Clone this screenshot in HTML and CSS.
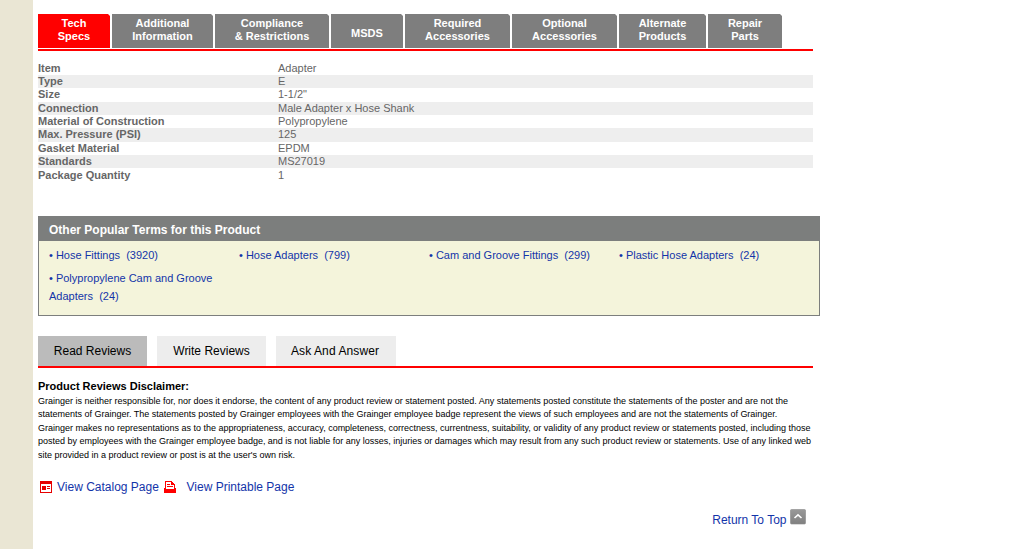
FILE: index.html
```html
<!DOCTYPE html>
<html lang="en">
<head>
<meta charset="utf-8">
<title>Product Details</title>
<link rel="stylesheet" href="styles.css">
</head>
<body>
<div class="page">
  <main class="content">
    <nav class="tabs">
      <a class="tab tab-specs active">Tech<br>Specs</a>
      <a class="tab tab-info">Additional<br>Information</a>
      <a class="tab tab-compliance">Compliance<br>&amp; Restrictions</a>
      <a class="tab tab-msds">MSDS</a>
      <a class="tab tab-required">Required<br>Accessories</a>
      <a class="tab tab-optional">Optional<br>Accessories</a>
      <a class="tab tab-alternate">Alternate<br>Products</a>
      <a class="tab tab-repair">Repair<br>Parts</a>
    </nav>
    <dl class="specs">
      <div class="spec"><dt>Item</dt><dd>Adapter</dd></div>
      <div class="spec"><dt>Type</dt><dd>E</dd></div>
      <div class="spec tall"><dt>Size</dt><dd>1-1/2"</dd></div>
      <div class="spec"><dt>Connection</dt><dd>Male Adapter x Hose Shank</dd></div>
      <div class="spec"><dt>Material of Construction</dt><dd>Polypropylene</dd></div>
      <div class="spec tall"><dt>Max. Pressure (PSI)</dt><dd>125</dd></div>
      <div class="spec"><dt>Gasket Material</dt><dd>EPDM</dd></div>
      <div class="spec"><dt>Standards</dt><dd>MS27019</dd></div>
      <div class="spec last"><dt>Package Quantity</dt><dd>1</dd></div>
    </dl>
    <section class="terms">
      <h2 class="terms-title">Other Popular Terms for this Product</h2>
      <div class="terms-list">
        <a class="term">• Hose Fittings&nbsp; (3920)</a>
        <a class="term">• Hose Adapters&nbsp; (799)</a>
        <a class="term">• Cam and Groove Fittings&nbsp; (299)</a>
        <a class="term">• Plastic Hose Adapters&nbsp; (24)</a>
        <a class="term">• Polypropylene Cam and Groove<br>Adapters&nbsp; (24)</a>
      </div>
    </section>
    <nav class="review-tabs">
      <a class="review-tab selected">Read Reviews</a>
      <a class="review-tab">Write Reviews</a>
      <a class="review-tab ask">Ask And Answer</a>
    </nav>
    <h3 class="disclaimer-title">Product Reviews Disclaimer:</h3>
    <p class="disclaimer">Grainger is neither responsible for, nor does it endorse, the content of any product review or statement posted. Any statements posted constitute the statements of the poster and are not the<br>statements of Grainger. The statements posted by Grainger employees with the Grainger employee badge represent the views of such employees and are not the statements of Grainger.<br>Grainger makes no representations as to the appropriateness, accuracy, completeness, correctness, currentness, suitability, or validity of any product review or statements posted, including those<br>posted by employees with the Grainger employee badge, and is not liable for any losses, injuries or damages which may result from any such product review or statements. Use of any linked web<br>site provided in a product review or post is at the user's own risk.</p>
    <div class="page-links">
      <svg class="icon" width="12" height="12" viewBox="0 0 12 12" shape-rendering="crispEdges"><path fill="#e60000" fill-rule="evenodd" d="M0 0H12V12H0ZM1 3V11H11V3Z"/><path fill="#e60000" d="M2 5H6V9H2ZM7 5H10V6H7ZM7 7H10V8H7Z"/></svg>
      <a class="catalog-link">View Catalog Page</a>
      <svg class="icon" width="12" height="12" viewBox="0 0 12 12" shape-rendering="crispEdges"><path fill="#f00" fill-rule="evenodd" d="M1 0H8V1H9V2H10V3H11V7H12V12H0V7H1ZM2 1V8H10V4H7V1ZM3 3H6V4H3ZM3 5H9V6H3Z"/></svg>
      <a class="print-link">View Printable Page</a>
    </div>
    <div class="top-link">
      <a>Return To Top</a>
      <svg class="top-icon" width="16" height="16" viewBox="0 0 16 16"><defs><linearGradient id="g" x2="0" y2="1"><stop stop-color="#999"/><stop offset="1" stop-color="#808080"/></linearGradient></defs><rect x=".5" y=".5" width="15" height="14.5" rx="1" fill="url(#g)" stroke="#888" stroke-opacity=".6"/><path d="M4.5 9L8 5.8L11.5 9" fill="none" stroke="#fff" stroke-width="1.6"/></svg>
    </div>
  </main>
</div>
</body>
</html>
```
FILE: styles.css
```css
body { margin: 0; background: #fff; font-family: Arial, "Liberation Sans", sans-serif; }
.page { box-sizing: border-box; height: 549px; border-left: 33px solid #eae6d4; padding: 14px 0 0 5px; overflow: hidden; }
.content { width: 782px; }
.tabs { display: flex; gap: 2px; width: 775px; height: 34px; padding-bottom: 1px; border-bottom: 2px solid #f00; }
.tab { box-sizing: border-box; padding-top: 3px; background: #7e7e7e; color: #fff; font-weight: bold; font-size: 11px; line-height: 13px; text-align: center; white-space: nowrap; clip-path: polygon(0 0, calc(100% - 2px) 0, 100% 2px, 100% 100%, 0 100%); }
.tab.active { background: #f00; }
.tab-specs { width: 72px; }
.tab-info { width: 101px; }
.tab-compliance { width: 114px; }
.tab-msds { width: 72px; padding-top: 13px; }
.tab-required { width: 105px; }
.tab-optional { width: 105px; }
.tab-alternate { width: 87px; }
.tab-repair { width: 74px; }
.specs { width: 775px; margin: 11px 0 0; color: #666; font-size: 11px; line-height: 13px; }
.spec { display: grid; grid-template-columns: 240px 1fr; height: 13px; }
.spec.tall { height: 14px; }
.spec.last { padding-top: 1px; }
.spec:nth-child(even) { background: #eee; }
.spec dt { font-weight: bold; }
.spec dd { margin: 0; }
.terms { box-sizing: border-box; width: 782px; height: 100px; margin-top: 34px; border: 1px solid #7c7e7d; background: #f4f4db; }
.terms-title { height: 24px; margin: 0; padding-left: 10px; background: #7c7e7d; color: #fff; font-size: 12px; line-height: 26px; }
.terms-list { display: grid; grid-template-columns: repeat(4, 190px); row-gap: 5px; padding: 5px 0 0 10px; }
.term { color: #1334a9; font-size: 11px; line-height: 18px; white-space: nowrap; }
.review-tabs { display: flex; gap: 10px; width: 775px; height: 30px; margin-top: 20px; border-bottom: 2px solid #f00; }
.review-tab { width: 109px; background: #ededed; color: #000; font-size: 12px; line-height: 30px; text-align: center; }
.review-tab.selected { background: #bbb; }
.review-tab.ask { box-sizing: border-box; width: 120px; padding-right: 2px; letter-spacing: 0.1px; }
.disclaimer-title { margin: 11px 0 0; font-size: 11px; line-height: 14px; }
.disclaimer { margin: 1.8px 0 0; font-size: 9px; line-height: 13.5px; letter-spacing: -0.005px; white-space: nowrap; }
.page-links { display: flex; align-items: center; height: 16px; margin-top: 16.7px; padding-left: 2px; color: #1334a9; font-size: 12px; }
.catalog-link { box-sizing: border-box; width: 107px; margin-right: 5px; padding-left: 5px; white-space: nowrap; }
.print-link { padding-left: 10.5px; }
.top-link { display: flex; justify-content: flex-end; width: 768px; margin-top: 14px; gap: 3.5px; color: #1334a9; font-size: 12px; line-height: 22px; }
```
